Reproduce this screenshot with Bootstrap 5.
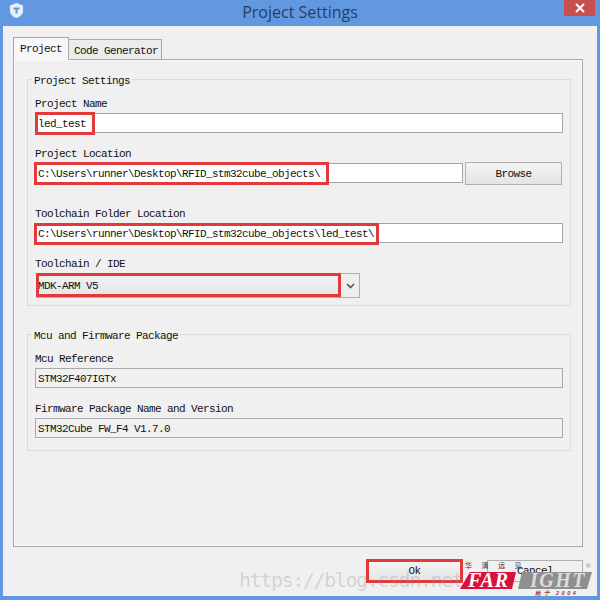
<!DOCTYPE html>
<html lang="en">
<head>
  <meta charset="UTF-8" />
  <meta name="viewport" content="width=device-width, initial-scale=1.0"/>
  <title>Project Settings</title>
  <link href="https://cdn.jsdelivr.net/npm/bootstrap@5.3.0/dist/css/bootstrap.min.css" rel="stylesheet"/>
  <style>
    html, body { height: 600px; overflow: hidden; }
    body { background: #6298e0; font: 11px/14px "Liberation Mono", monospace; letter-spacing: -.6px; color: #111; }
    .win-frame { position: relative; height: 600px; padding: 0 3px 4px; display: flex; flex-direction: column; }
    .win-title { height: 26px; flex: none; position: relative; text-align: center; font: 16px/25px "Open Sans", sans-serif; letter-spacing: 0; color: #24405f; }
    .win-logo { position: absolute; left: 6px; top: 2px; }
    .win-close { position: absolute; right: 2px; top: 0; width: 31px; height: 16px; background: #c9504f; display: flex; align-items: center; justify-content: center; }
    .win-client { flex: 1; background: #f0f0f0; padding: 11px 14px 0 10px; display: flex; flex-direction: column; }
    .tab-row { display: flex; align-items: flex-end; height: 23px; margin-bottom: -1px; position: relative; z-index: 1; padding: 0; border: 0; list-style: none; }
    .tab-row .nav-link { font-size: 11px; letter-spacing: -.6px; color: #111; border-radius: 0; margin: 0; }
    .tab-on { width: 56px; height: 23px; padding: 4px 0 0 6px; background: #f7f7f7; border: 1px solid #a9a9a9; border-bottom-color: #f7f7f7; }
    .tab-off { width: 93px; height: 21px; padding: 4px 0 0 5px; background: #ececec; border: 1px solid #a9a9a9; border-left: 0; }
    .tab-body { height: 488px; background: #f0f0f0; border: 1px solid #a9a9a9; box-shadow: inset 0 0 0 1px #f7f7f7; padding: 19px 11px 0 13px; }
    .grp { position: relative; border: 1px solid #dcdcdc; padding: 17px 7px 0 7px; }
    .grp-one { height: 227px; margin-bottom: 28px; }
    .grp-two { height: 117px; }
    .grp-name { position: absolute; left: 4px; top: -6px; padding: 0 2px; background: #f0f0f0; height: 14px; }
    .fld-label { display: block; height: 14px; margin: 0; }
    .fld-box { display: block; position: relative; height: 20px; margin-top: 2px; }
    .fld-input.form-control { height: 20px; padding: 1px 0 0 2px; border: 1px solid #a5a5a5; border-radius: 0; font: inherit; letter-spacing: inherit; color: #111; background: #fff; box-shadow: none; }
    .fld-input.fld-ro { background: #f0f0f0; border-color: #a9a9a9; }
    .red-mark { position: absolute; border: 3px solid #e23a3c; pointer-events: none; }
    .mark-name { left: 0; top: -1px; width: 60px; height: 23px; }
    .mark-loc { left: -1px; top: -1px; width: 295px; height: 23px; }
    .mark-tool { left: -1px; top: 0; width: 345px; height: 22px; }
    .gap-name { margin-bottom: 14px; }
    .gap-tool { margin-bottom: 14px; }
    .loc-row { display: flex; gap: 2px; align-items: flex-start; margin: 1px 1px 22px 0; }
    .loc-row .fld-box { flex: 1; margin-top: 1px; }
    .push-btn.btn { width: 97px; height: 23px; padding: 0; font: inherit; letter-spacing: inherit; color: #111; background: linear-gradient(#f4f4f4, #e4e4e4); border: 1px solid #b0b0b0; border-radius: 0; }
    .sel-box { position: relative; width: 324px; height: 25px; margin: 2px 0 0 1px; }
    .sel-box .form-select { height: 25px; padding: 0 0 0 1px; background: linear-gradient(#f2f2f2, #e5e5e5); border: 1px solid #b0b0b0; border-radius: 0; font: inherit; letter-spacing: inherit; color: #111; box-shadow: none; }
    .sel-arrow { position: absolute; right: 1px; top: 1px; bottom: 1px; width: 18px; background: #eee; display: flex; align-items: center; justify-content: center; }
    .mark-sel { left: 0; top: 0; width: 305px; height: 24px; }
    .foot-row { position: relative; flex: 1; display: flex; justify-content: flex-end; gap: 24px; padding: 13px 0 0 0; }
    .mark-ok { left: 0; top: -1px; width: 97px; height: 24px; }
    .ok-wrap { position: relative; height: 22px; }
    .ok-wrap .btn, .cancel-btn.btn { height: 22px; }
    .cancel-btn.btn { width: 96px; background: #f0f0f0; }
    .water-mark { position: absolute; left: 239px; top: 569px; font: 20px/22px "DejaVu Sans Mono", monospace; letter-spacing: -1.4px; color: rgba(150,150,150,.32); white-space: nowrap; pointer-events: none; }
    .far-logo { position: absolute; left: 460px; top: 560px; width: 135px; height: 36px; pointer-events: none; }
  </style>
</head>
<body>
  <div class="win-frame">
    <div class="win-title">
      <svg class="win-logo" width="15" height="17" viewBox="0 0 15 17"><path d="M7.5 1 14 3.5V9c0 3.5-3 5.8-6.5 7C4 14.8 1 12.500 1 9V3.500Z" fill="#e6f0fb"/><path d="M4.500 5.500h6v2h-2v4h-2v-4h-2Z" fill="#6298e0"/></svg>
      Project Settings
      <div class="win-close"><svg width="10" height="10" viewBox="0 0 10 10"><path d="M1 1 9 9M9 1 1 9" stroke="#fff" stroke-width="2"/></svg></div>
    </div>
    <div class="win-client">
      <ul class="nav tab-row">
        <li class="nav-item"><a class="nav-link tab-on" href="#">Project</a></li>
        <li class="nav-item"><a class="nav-link tab-off" href="#">Code Generator</a></li>
      </ul>
      <div class="tab-body">
        <div class="grp grp-one">
          <div class="grp-name">Project Settings</div>
          <label class="fld-label">Project Name</label>
          <div class="fld-box gap-name">
            <input class="form-control fld-input" value="led_test">
            <span class="red-mark mark-name"></span>
          </div>
          <label class="fld-label">Project Location</label>
          <div class="loc-row">
            <div class="fld-box">
              <input class="form-control fld-input" value="C:\Users\runner\Desktop\RFID_stm32cube_objects\">
              <span class="red-mark mark-loc"></span>
            </div>
            <button class="btn push-btn">Browse</button>
          </div>
          <label class="fld-label">Toolchain Folder Location</label>
          <div class="fld-box gap-tool">
            <input class="form-control fld-input" value="C:\Users\runner\Desktop\RFID_stm32cube_objects\led_test\">
            <span class="red-mark mark-tool"></span>
          </div>
          <label class="fld-label">Toolchain / IDE</label>
          <div class="sel-box">
            <select class="form-select"><option>MDK-ARM V5</option></select>
            <span class="sel-arrow"><svg width="9" height="6" viewBox="0 0 9 6"><path d="M1 1 4.500 4.500 8 1" fill="none" stroke="#555" stroke-width="1.600"/></svg></span>
            <span class="red-mark mark-sel"></span>
          </div>
        </div>
        <div class="grp grp-two">
          <div class="grp-name">Mcu and Firmware Package</div>
          <label class="fld-label">Mcu Reference</label>
          <div class="fld-box gap-name">
            <input class="form-control fld-input fld-ro" value="STM32F407IGTx" readonly>
          </div>
          <label class="fld-label">Firmware Package Name and Version</label>
          <div class="fld-box">
            <input class="form-control fld-input fld-ro" value="STM32Cube FW_F4 V1.7.0" readonly>
          </div>
        </div>
      </div>
      <div class="foot-row">
        <div class="ok-wrap">
          <button class="btn push-btn">Ok</button>
          <span class="red-mark mark-ok"></span>
        </div>
        <button class="btn push-btn cancel-btn">Cancel</button>
      </div>
    </div>
    <div class="water-mark">https://blog.csdn.net/</div>
    <svg class="far-logo" viewBox="0 0 135 36">
      <text x="5" y="8" font-size="7" font-family="Noto Sans CJK SC, sans-serif" fill="#333" letter-spacing="9.500">华清远见</text>
      <path d="M10 12H56L52 29H0Z" fill="#d9103c"/>
      <path d="M62 12H132L127 29H58Z" fill="#8f8f8f"/>
      <text x="8" y="27" font-size="20" font-style="italic" font-weight="700" font-family="Liberation Serif, serif" fill="#fff" letter-spacing="1">FAR</text>
      <text x="70" y="27" font-size="20" font-style="italic" font-weight="700" font-family="Liberation Serif, serif" fill="#dcdcdc" letter-spacing="1.500">IGHT</text>
      <text x="75" y="35" font-size="5.500" font-family="Liberation Sans, sans-serif" font-weight="700" font-style="italic" fill="#a33" letter-spacing="2.500">始于 2004</text>
      <text x="126" y="8" font-size="6" font-family="Liberation Sans, sans-serif" fill="#777">®</text>
    </svg>
  </div>
  <script src="https://cdn.jsdelivr.net/npm/bootstrap@5.3.0/dist/js/bootstrap.bundle.min.js"></script>
</body>
</html>
